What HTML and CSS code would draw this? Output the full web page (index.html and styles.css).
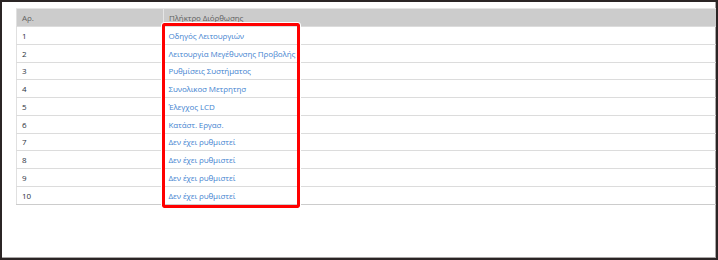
FILE: index.html
```html
<!DOCTYPE html>
<html lang="el">
<head>
<meta charset="utf-8">
<link rel="stylesheet" href="styles.css">
</head>
<body>
<div class="frame">
  <table class="keys">
    <thead>
      <tr><th class="c-no">Αρ.</th><th class="c-key">Πλήκτρο Διόρθωσης</th><th class="c-rest"></th></tr>
    </thead>
    <tbody>
      <tr><td>1</td><td><a>Οδηγός Λειτουργιών</a></td><td></td></tr>
      <tr><td>2</td><td><a>Λειτουργία Μεγέθυνσης Προβολής</a></td><td></td></tr>
      <tr><td>3</td><td><a>Ρυθμίσεις Συστήματος</a></td><td></td></tr>
      <tr><td>4</td><td><a>Συνολικοσ Μετρητησ</a></td><td></td></tr>
      <tr><td>5</td><td><a>Έλεγχος LCD</a></td><td></td></tr>
      <tr><td>6</td><td><a>Κατάστ. Εργασ.</a></td><td></td></tr>
      <tr><td>7</td><td><a>Δεν έχει ρυθμιστεί</a></td><td></td></tr>
      <tr><td>8</td><td><a>Δεν έχει ρυθμιστεί</a></td><td></td></tr>
      <tr><td>9</td><td><a>Δεν έχει ρυθμιστεί</a></td><td></td></tr>
      <tr><td>10</td><td><a>Δεν έχει ρυθμιστεί</a></td><td></td></tr>
    </tbody>
  </table>
  <div class="highlight"></div>
</div>
</body>
</html>
```
FILE: styles.css
```css
html, body {
  margin: 0;
  padding: 0;
  background: #fff;
}
.frame {
  position: relative;
  box-sizing: border-box;
  width: 718px;
  height: 260px;
  border: 2px solid #2b2525;
  box-shadow: inset 0 -1px 0 #a9a6a6, inset -1px 0 0 #a9a6a6;
  padding: 6px 0 0 14px;
  font-family: "Open Sans", "Liberation Sans", sans-serif;
  font-size: 8px;
  letter-spacing: -0.12px;
}
.keys {
  border-collapse: collapse;
  width: 700px;
  border-top: 1px solid #e6e6e6;
  border-left: 1px solid #e0e0e0;
  border-bottom: 1px solid #cccccc;
}
.keys th {
  background: #cccccc;
  color: #606060;
  font-weight: normal;
  text-align: left;
  height: 18px;
  padding: 0 0 0 5px;
  box-sizing: border-box;
}
.keys th.c-key {
  border-left: 1px solid #e6e6e6;
}
.c-no { width: 147px; }
.c-key { width: 137px; }
.keys td {
  height: 17.75px;
  padding: 0 0 0 5px;
  box-sizing: border-box;
  color: #2a3040;
  border-top: 1px solid #dcdcdc;
}
.keys td a {
  color: #4483d0;
  white-space: nowrap;
}
.highlight {
  position: absolute;
  left: 160px;
  top: 21px;
  width: 132px;
  height: 179px;
  border: 3px solid #ff0000;
  border-radius: 2px;
  outline: 1px solid #ffffff;
}
```
